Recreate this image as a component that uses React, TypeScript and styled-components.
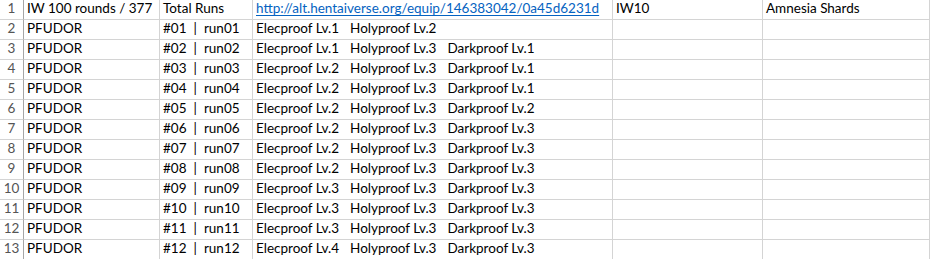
import React from 'react';
import styled, { createGlobalStyle } from 'styled-components';

const GlobalStyle = createGlobalStyle`
  html, body {
    margin: 0;
    padding: 0;
    background: #ffffff;
  }
  body {
    font-family: Lato, 'Liberation Sans', sans-serif;
  }
`;

const Sheet = styled.div`
  display: grid;
  grid-template-columns: 24px 136px 93px 360px 150px 1fr;
  grid-auto-rows: 20px;
  width: 930px;
  font-size: 13.5px;
  color: #000000;
`;

const Cell = styled.div<{ $link?: boolean }>`
  box-sizing: border-box;
  display: flex;
  align-items: flex-end;
  gap: 11px;
  padding: 0 3px 3px 3px;
  border-right: 1px solid #d4d4d4;
  border-bottom: 1px solid #d4d4d4;
  white-space: pre;
  color: ${(p) => (p.$link ? '#0563c1' : '#000000')};
  text-decoration: ${(p) => (p.$link ? 'underline' : 'none')};
  text-underline-offset: 2px;
`;

const RowHead = styled.div`
  box-sizing: border-box;
  display: flex;
  align-items: flex-end;
  justify-content: center;
  padding-bottom: 3px;
  border-right: 1px solid #a6a6a6;
  border-bottom: 1px solid #d4d4d4;
  color: #555555;
`;

const Pipe = styled.span`
  margin: 0 -4px;
`;

const rows: [number, string[]][] = [
  [1, ['Elecproof Lv.1', 'Holyproof Lv.2']],
  [2, ['Elecproof Lv.1', 'Holyproof Lv.3', 'Darkproof Lv.1']],
  [3, ['Elecproof Lv.2', 'Holyproof Lv.3', 'Darkproof Lv.1']],
  [4, ['Elecproof Lv.2', 'Holyproof Lv.3', 'Darkproof Lv.1']],
  [5, ['Elecproof Lv.2', 'Holyproof Lv.3', 'Darkproof Lv.2']],
  [6, ['Elecproof Lv.2', 'Holyproof Lv.3', 'Darkproof Lv.3']],
  [7, ['Elecproof Lv.2', 'Holyproof Lv.3', 'Darkproof Lv.3']],
  [8, ['Elecproof Lv.2', 'Holyproof Lv.3', 'Darkproof Lv.3']],
  [9, ['Elecproof Lv.3', 'Holyproof Lv.3', 'Darkproof Lv.3']],
  [10, ['Elecproof Lv.3', 'Holyproof Lv.3', 'Darkproof Lv.3']],
  [11, ['Elecproof Lv.3', 'Holyproof Lv.3', 'Darkproof Lv.3']],
  [12, ['Elecproof Lv.4', 'Holyproof Lv.3', 'Darkproof Lv.3']],
];

const pad = (n: number) => String(n).padStart(2, '0');

const App = () => {
  return (
    <>
      <GlobalStyle />
      <Sheet>
        <RowHead>1</RowHead>
        <Cell>IW 100 rounds / 377</Cell>
        <Cell>Total Runs</Cell>
        <Cell $link>http://alt.hentaiverse.org/equip/146383042/0a45d6231d</Cell>
        <Cell>IW10</Cell>
        <Cell>Amnesia Shards</Cell>
        {rows.map(([run, potency]) => (
          <React.Fragment key={run}>
            <RowHead>{run + 1}</RowHead>
            <Cell>PFUDOR</Cell>
            <Cell>
              <span>#{pad(run)}</span>
              <Pipe>|</Pipe>
              <span>run{pad(run)}</span>
            </Cell>
            <Cell>
              {potency.map((p) => (
                <span key={p}>{p}</span>
              ))}
            </Cell>
            <Cell />
            <Cell />
          </React.Fragment>
        ))}
      </Sheet>
    </>
  );
};

export default App;
